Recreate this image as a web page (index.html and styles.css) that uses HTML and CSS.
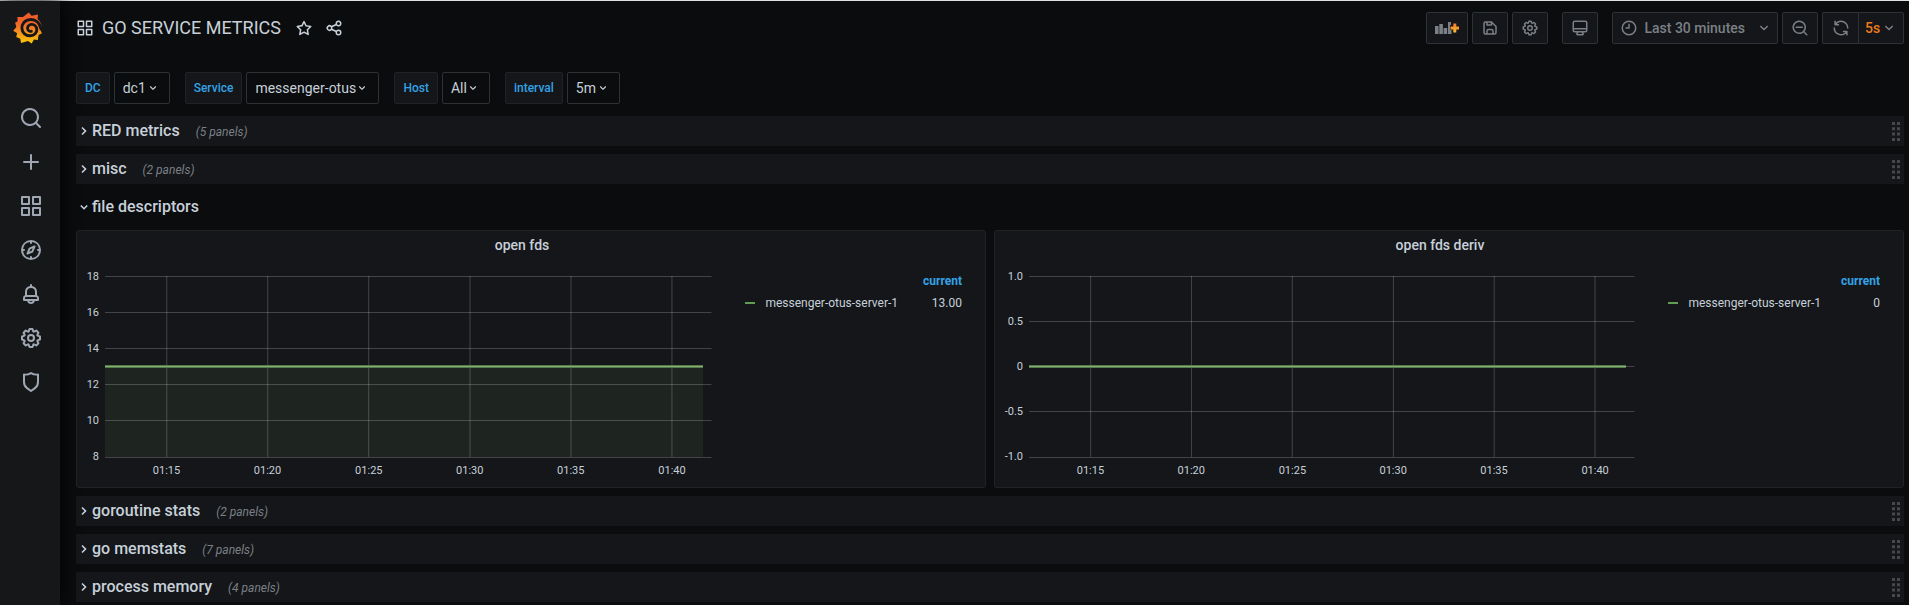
FILE: index.html
```
<!DOCTYPE html>
<html lang="en">
<head>
<meta charset="utf-8">
<title>GO SERVICE METRICS</title>
<link rel="stylesheet" href="styles.css">
</head>
<body>
<svg width="0" height="0" class="defs" aria-hidden="true">
  <symbol id="search" viewBox="0 0 24 24"><path d="M21.71,20.29,18,16.61A9,9,0,1,0,16.61,18l3.68,3.68a1,1,0,0,0,1.42,0A1,1,0,0,0,21.71,20.29ZM11,18a7,7,0,1,1,7-7A7,7,0,0,1,11,18Z"/></symbol>
  <symbol id="zoom-out" viewBox="0 0 24 24"><path d="M21.71,20.29,18,16.61A9,9,0,1,0,16.61,18l3.68,3.68a1,1,0,0,0,1.42,0A1,1,0,0,0,21.71,20.29ZM11,18a7,7,0,1,1,7-7A7,7,0,0,1,11,18ZM15,10H7a1,1,0,0,0,0,2h8a1,1,0,0,0,0-2Z"/></symbol>
  <symbol id="plus" viewBox="0 0 24 24"><path d="M19,11H13V5a1,1,0,0,0-2,0v6H5a1,1,0,0,0,0,2h6v6a1,1,0,0,0,2,0V13h6a1,1,0,0,0,0-2Z"/></symbol>
  <symbol id="apps" viewBox="0 0 24 24"><path d="M10,13H3a1,1,0,0,0-1,1v7a1,1,0,0,0,1,1h7a1,1,0,0,0,1-1V14A1,1,0,0,0,10,13ZM9,20H4V15H9ZM21,2H14a1,1,0,0,0-1,1v7a1,1,0,0,0,1,1h7a1,1,0,0,0,1-1V3A1,1,0,0,0,21,2ZM20,9H15V4h5Zm1,4H14a1,1,0,0,0-1,1v7a1,1,0,0,0,1,1h7a1,1,0,0,0,1-1V14A1,1,0,0,0,21,13Zm-1,7H15V15h5ZM10,2H3A1,1,0,0,0,2,3v7a1,1,0,0,0,1,1h7a1,1,0,0,0,1-1V3A1,1,0,0,0,10,2ZM9,9H4V4H9Z"/></symbol>
  <symbol id="compass" viewBox="0 0 24 24"><path d="M12,2A10,10,0,1,0,22,12,10,10,0,0,0,12,2Zm1,17.93V19a1,1,0,0,0-2,0v.93A8,8,0,0,1,4.07,13H5a1,1,0,0,0,0-2H4.07A8,8,0,0,1,11,4.07V5a1,1,0,0,0,2,0V4.07A8,8,0,0,1,19.93,11H19a1,1,0,0,0,0,2h.93A8,8,0,0,1,13,19.93ZM15.14,7.55l-5,2.12a1,1,0,0,0-.52.52l-2.12,5a1,1,0,0,0,.21,1.1,1,1,0,0,0,.7.3.93.93,0,0,0,.4-.09l5-2.12a1,1,0,0,0,.52-.52l2.12-5a1,1,0,0,0-1.31-1.31Zm-2.49,5.1-2.28,1,1-2.28,2.28-1Z"/></symbol>
  <symbol id="bell" viewBox="0 0 24 24"><path d="M18,13.18V10a6,6,0,0,0-5-5.91V3a1,1,0,0,0-2,0V4.09A6,6,0,0,0,6,10v3.18A3,3,0,0,0,4,16v2a1,1,0,0,0,1,1H8.14a4,4,0,0,0,7.72,0H19a1,1,0,0,0,1-1V16A3,3,0,0,0,18,13.18ZM8,10a4,4,0,0,1,8,0v3H8Zm4,10a2,2,0,0,1-1.72-1h3.44A2,2,0,0,1,12,20Zm6-3H6V16a1,1,0,0,1,1-1H17a1,1,0,0,1,1,1Z"/></symbol>
  <symbol id="cog" viewBox="0 0 24 24"><path d="M21.32,9.55l-1.89-.63.89-1.78A1,1,0,0,0,20.13,6L18,3.87a1,1,0,0,0-1.15-.19l-1.78.89-.63-1.89A1,1,0,0,0,13.5,2h-3a1,1,0,0,0-.95.68L8.92,4.57,7.14,3.68A1,1,0,0,0,6,3.87L3.87,6a1,1,0,0,0-.19,1.15l.89,1.78-1.89.63A1,1,0,0,0,2,10.5v3a1,1,0,0,0,.68.95l1.89.63-.89,1.78A1,1,0,0,0,3.87,18L6,20.13a1,1,0,0,0,1.15.19l1.78-.89.63,1.89a1,1,0,0,0,.95.68h3a1,1,0,0,0,.95-.68l.63-1.89,1.78.89A1,1,0,0,0,18,20.13L20.13,18a1,1,0,0,0,.19-1.15l-.89-1.78,1.89-.63A1,1,0,0,0,22,13.5v-3A1,1,0,0,0,21.32,9.55ZM20,12.78l-1.2.4A2,2,0,0,0,17.64,16l.57,1.14-1.1,1.1L16,17.64a2,2,0,0,0-2.79,1.16l-.4,1.2H11.22l-.4-1.2A2,2,0,0,0,8,17.64l-1.14.57-1.1-1.1L6.36,16A2,2,0,0,0,5.2,13.18L4,12.78V11.22l1.2-.4A2,2,0,0,0,6.36,8L5.79,6.89l1.1-1.1L8,6.36A2,2,0,0,0,10.82,5.2l.4-1.2h1.56l.4,1.2A2,2,0,0,0,16,6.36l1.14-.57,1.1,1.1L17.64,8a2,2,0,0,0,1.16,2.79l1.2.4ZM12,8a4,4,0,1,0,4,4A4,4,0,0,0,12,8Zm0,6a2,2,0,1,1,2-2A2,2,0,0,1,12,14Z"/></symbol>
  <symbol id="shield" viewBox="0 0 24 24"><path d="M19.63,3.65a1,1,0,0,0-.84-.2,8,8,0,0,1-6.22-1.27,1,1,0,0,0-1.14,0A8,8,0,0,1,5.21,3.45a1,1,0,0,0-.84.2A1,1,0,0,0,4,4.43v7.45a9,9,0,0,0,3.77,7.33l3.65,2.6a1,1,0,0,0,1.16,0l3.65-2.6A9,9,0,0,0,20,11.88V4.43A1,1,0,0,0,19.63,3.65ZM18,11.88a7,7,0,0,1-2.93,5.7L12,19.77,8.93,17.58A7,7,0,0,1,6,11.88V5.58a10,10,0,0,0,6-1.39,10,10,0,0,0,6,1.39Z"/></symbol>
  <symbol id="star" viewBox="0 0 24 24"><path d="M22,9.67A1,1,0,0,0,21.14,9l-5.69-.83L12.9,3a1,1,0,0,0-1.8,0L8.55,8.16,2.86,9a1,1,0,0,0-.81.68,1,1,0,0,0,.25,1l4.13,4-1,5.68A1,1,0,0,0,6.9,21.44L12,18.77l5.1,2.67a.93.93,0,0,0,.46.12,1,1,0,0,0,.59-.19,1,1,0,0,0,.4-1l-1-5.68,4.13-4A1,1,0,0,0,22,9.67Zm-6.15,4a1,1,0,0,0-.29.88l.72,4.2-3.76-2a1.06,1.06,0,0,0-.94,0l-3.76,2,.72-4.2a1,1,0,0,0-.29-.88l-3-3,4.21-.61a1,1,0,0,0,.76-.55L12,5.7l1.88,3.82a1,1,0,0,0,.76.55l4.21.61Z"/></symbol>
  <symbol id="share" viewBox="0 0 24 24"><path d="M18,14a4,4,0,0,0-3.08,1.48l-5.1-2.35a3.64,3.64,0,0,0,0-2.26l5.1-2.35A4,4,0,1,0,14,6a4.17,4.17,0,0,0,.07.71L8.79,9.14a4,4,0,1,0,0,5.72l5.28,2.43A4.17,4.17,0,0,0,14,18a4,4,0,1,0,4-4ZM18,4a2,2,0,1,1-2,2A2,2,0,0,1,18,4ZM6,14a2,2,0,1,1,2-2A2,2,0,0,1,6,14Zm12,6a2,2,0,1,1,2-2A2,2,0,0,1,18,20Z"/></symbol>
  <symbol id="save" viewBox="0 0 24 24"><path d="M20.71,9.29l-6-6a1,1,0,0,0-.32-.21A1.09,1.09,0,0,0,14,3H6A3,3,0,0,0,3,6V18a3,3,0,0,0,3,3H18a3,3,0,0,0,3-3V10A1,1,0,0,0,20.71,9.29ZM9,5h4V7H9Zm6,14H9V16a1,1,0,0,1,1-1h4a1,1,0,0,1,1,1Zm4-1a1,1,0,0,1-1,1H17V16a3,3,0,0,0-3-3H10a3,3,0,0,0-3,3v3H6a1,1,0,0,1-1-1V6A1,1,0,0,1,6,5H7V8A1,1,0,0,0,8,9h6a1,1,0,0,0,1-1V6.41l4,4Z"/></symbol>
  <symbol id="monitor" viewBox="0 0 24 24"><path d="M19,2H5A3,3,0,0,0,2,5V15a3,3,0,0,0,3,3H7.64l-.58,1a2,2,0,0,0,0,2,2,2,0,0,0,1.75,1h6.46A2,2,0,0,0,17,21a2,2,0,0,0,0-2l-.59-1H19a3,3,0,0,0,3-3V5A3,3,0,0,0,19,2ZM8.77,20,10,18H14l1.2,2ZM20,15a1,1,0,0,1-1,1H5a1,1,0,0,1-1-1V14H20Zm0-3H4V5A1,1,0,0,1,5,4H19a1,1,0,0,1,1,1Z"/></symbol>
  <symbol id="clock" viewBox="0 0 24 24"><path d="M12,2A10,10,0,1,0,22,12,10,10,0,0,0,12,2Zm0,18a8,8,0,1,1,8-8A8,8,0,0,1,12,20ZM12,6a1,1,0,0,0-1,1v4H8a1,1,0,0,0,0,2h4a1,1,0,0,0,1-1V7A1,1,0,0,0,12,6Z"/></symbol>
  <symbol id="angle-down" viewBox="0 0 24 24"><path d="M17,9.17a1,1,0,0,0-1.41,0L12,12.71,8.46,9.17a1,1,0,0,0-1.41,0,1,1,0,0,0,0,1.42l4.24,4.24a1,1,0,0,0,1.42,0L17,10.59A1,1,0,0,0,17,9.17Z"/></symbol>
  <symbol id="sync" viewBox="0 0 24 24"><path d="M19.91,15.51H15.38a1,1,0,0,0,0,2h2.4A8,8,0,0,1,4,12a1,1,0,1,0-2,0,10,10,0,0,0,16.88,7.23V21a1,1,0,0,0,2,0V16.5A1,1,0,0,0,19.91,15.51ZM12,2A10,10,0,0,0,5.12,4.77V3a1,1,0,0,0-2,0V7.5a1,1,0,0,0,1,1h4.5a1,1,0,0,0,0-2H6.22A8,8,0,0,1,20,12a1,1,0,0,0,2,0A10,10,0,0,0,12,2Z"/></symbol>
  <symbol id="caret-right" viewBox="0 0 8 12"><path d="M2 2.5 5.5 6 2 9.5" fill="none" stroke="currentColor" stroke-width="1.6"/></symbol>
  <symbol id="caret-down" viewBox="0 0 8 12"><path d="M.8 4.5 4 7.7 7.2 4.5" fill="none" stroke="currentColor" stroke-width="1.6"/></symbol>
  <symbol id="grip" viewBox="0 0 8 19"><path d="M0 0h3v3H0zM5 0h3v3H5zM0 5.3h3v3H0zM5 5.3h3v3H5zM0 10.6h3v3H0zM5 10.6h3v3H5zM0 16h3v3H0zM5 16h3v3H5z"/></symbol>
</svg>

<div class="app">
  <nav class="sidebar" aria-label="Main">
    <a class="logo" href="#" aria-label="Home">
      <svg viewBox="0 0 30 32" width="30" height="32">
        <defs><linearGradient id="flame" x1="0" y1="0" x2="0" y2="1"><stop offset="0" stop-color="#f05a28"/><stop offset=".35" stop-color="#f1652a"/><stop offset="1" stop-color="#fbca0a"/></linearGradient></defs>
        <path fill="url(#flame)" d="M15.7.5 18.6 3.700 25 2.600 24.600 7.200C27.500 9.600 28.600 12.300 28.600 15.300L26.900 17.300 29 21.200 25.600 22.900 24.800 28 20.900 27.600 18.700 31.500 15 29.100 8 31 7.300 26.700 3.200 25 4.200 21.300.2 18.800 3.400 15 2.100 10.700 4.600 9.200 4.400 5.100 10 4.900Z"/>
        <path fill="none" stroke="#161719" stroke-width="2.900" stroke-linecap="round" d="M27.800 16.500C26.500 9.800 21.500 7.300 17 7.600 11.500 8 8.600 12.200 8.900 16.400 9.200 21 12.800 24 17.200 23.800 21.400 23.600 24 20.500 23.800 17.300 23.500 14 21 12.200 18.400 12.400 15.800 12.700 14.400 14.700 14.600 16.700 14.800 18.600 16.500 19.700 18.300 19.300"/>
      </svg>
    </a>
    <a href="#" aria-label="Search"><svg class="icon-lg"><use href="#search"/></svg></a>
    <a href="#" aria-label="Create"><svg class="icon-lg"><use href="#plus"/></svg></a>
    <a href="#" aria-label="Dashboards"><svg class="icon-lg"><use href="#apps"/></svg></a>
    <a href="#" aria-label="Explore"><svg class="icon-lg"><use href="#compass"/></svg></a>
    <a href="#" aria-label="Alerting"><svg class="icon-lg"><use href="#bell"/></svg></a>
    <a href="#" aria-label="Configuration"><svg class="icon-lg"><use href="#cog"/></svg></a>
    <a href="#" aria-label="Server admin"><svg class="icon-lg"><use href="#shield"/></svg></a>
  </nav>

  <main class="main">
    <header class="toolbar">
      <svg class="icon-md"><use href="#apps"/></svg>
      <h1>GO SERVICE METRICS</h1>
      <button class="plain" aria-label="Mark as favorite"><svg class="icon-md"><use href="#star"/></svg></button>
      <button class="plain" aria-label="Share dashboard"><svg class="icon-md"><use href="#share"/></svg></button>
      <div class="actions">
        <div class="group">
          <button class="btn btn-add" aria-label="Add panel">
            <svg viewBox="0 0 24 14" width="24" height="14">
              <defs><linearGradient id="sun" x1="0" y1="0" x2="0" y2="1"><stop offset="0" stop-color="#f2752e"/><stop offset="1" stop-color="#fbc02d"/></linearGradient></defs>
              <path d="M0 5h3.600v8H0zM4.300 3h3.600v10H4.300zM8.600 7h3.600v6H8.600zM13 1h3v3h-1v5h1.500v4H13z"/>
              <path fill="url(#sun)" d="M18.300 2.500h3v3H24v3h-2.700v3h-3v-3h-2.800v-3h2.800z"/>
            </svg>
          </button>
          <button class="btn" aria-label="Save dashboard"><svg class="icon"><use href="#save"/></svg></button>
          <button class="btn" aria-label="Dashboard settings"><svg class="icon"><use href="#cog"/></svg></button>
        </div>
        <button class="btn" aria-label="Cycle view mode"><svg class="icon"><use href="#monitor"/></svg></button>
        <div class="group">
          <button class="btn btn-time" aria-haspopup="true"><svg class="icon"><use href="#clock"/></svg><span>Last 30 minutes</span><svg class="icon"><use href="#angle-down"/></svg></button>
          <button class="btn" aria-label="Zoom out"><svg class="icon"><use href="#zoom-out"/></svg></button>
          <div class="refresh">
            <button class="btn" aria-label="Refresh"><svg class="icon"><use href="#sync"/></svg></button>
            <div class="picker picker-refresh">
              <select aria-label="Refresh interval"><option>5s</option></select>
              <svg class="icon"><use href="#angle-down"/></svg>
            </div>
          </div>
        </div>
      </div>
    </header>

    <form class="variables">
      <div class="variable"><label for="v-dc">DC</label><div class="picker"><select id="v-dc"><option>dc1</option></select><svg class="icon-sm"><use href="#angle-down"/></svg></div></div>
      <div class="variable"><label for="v-service">Service</label><div class="picker"><select id="v-service"><option>messenger-otus</option></select><svg class="icon-sm"><use href="#angle-down"/></svg></div></div>
      <div class="variable"><label for="v-host">Host</label><div class="picker"><select id="v-host"><option>All</option></select><svg class="icon-sm"><use href="#angle-down"/></svg></div></div>
      <div class="variable"><label for="v-interval">interval</label><div class="picker"><select id="v-interval"><option>5m</option></select><svg class="icon-sm"><use href="#angle-down"/></svg></div></div>
    </form>

    <div class="rows">
      <section class="row"><button class="row-title"><svg class="caret"><use href="#caret-right"/></svg>RED metrics<span class="count">(5 panels)</span></button><svg class="grip"><use href="#grip"/></svg></section>
      <section class="row"><button class="row-title"><svg class="caret"><use href="#caret-right"/></svg>misc<span class="count">(2 panels)</span></button><svg class="grip"><use href="#grip"/></svg></section>
      <section class="row row-open"><button class="row-title" aria-expanded="true"><svg class="caret"><use href="#caret-down"/></svg>file descriptors</button></section>

      <div class="panels">
        <section class="panel">
          <h2>open fds</h2>
          <div class="panel-body">
            <div class="y-axis"><span>18</span><span>16</span><span>14</span><span>12</span><span>10</span><span>8</span></div>
            <svg class="plot" role="img" aria-label="open fds over time">
              <rect class="area" x="0" y="90" width="98.6%" height="91"/>
              <g class="grid">
                <rect y="0" width="100%" height="1"/><rect y="36" width="100%" height="1"/><rect y="72" width="100%" height="1"/><rect y="108" width="100%" height="1"/><rect y="144" width="100%" height="1"/><rect y="181" width="100%" height="1"/>
                <rect x="10.1%" width="1" height="181"/><rect x="26.75%" width="1" height="181"/><rect x="43.4%" width="1" height="181"/><rect x="60.1%" width="1" height="181"/><rect x="76.75%" width="1" height="181"/><rect x="93.4%" width="1" height="181"/>
              </g>
              <rect class="series-edge" y="89" width="98.6%" height="3"/><rect class="series" y="90" width="98.6%" height="1"/>
              <g class="x-axis"><text x="10.15%" y="198">01:15</text><text x="26.8%" y="198">01:20</text><text x="43.5%" y="198">01:25</text><text x="60.15%" y="198">01:30</text><text x="76.8%" y="198">01:35</text><text x="93.5%" y="198">01:40</text></g>
            </svg>
            <table class="legend">
              <thead><tr><th></th><th scope="col">current</th></tr></thead>
              <tbody><tr><td><i class="swatch"></i>messenger-otus-server-1</td><td>13.00</td></tr></tbody>
            </table>
          </div>
        </section>
        <section class="panel panel-wide-axis">
          <h2>open fds deriv</h2>
          <div class="panel-body">
            <div class="y-axis"><span>1.0</span><span>0.5</span><span>0</span><span>-0.5</span><span>-1.0</span></div>
            <svg class="plot" role="img" aria-label="open fds deriv over time">
              <g class="grid">
                <rect y="0" width="100%" height="1"/><rect y="45" width="100%" height="1"/><rect y="90" width="100%" height="1"/><rect y="135" width="100%" height="1"/><rect y="181" width="100%" height="1"/>
                <rect x="10.1%" width="1" height="181"/><rect x="26.75%" width="1" height="181"/><rect x="43.4%" width="1" height="181"/><rect x="60.1%" width="1" height="181"/><rect x="76.75%" width="1" height="181"/><rect x="93.4%" width="1" height="181"/>
              </g>
              <rect class="series-edge" y="89" width="98.6%" height="3"/><rect class="series" y="90" width="98.6%" height="1"/>
              <g class="x-axis"><text x="10.15%" y="198">01:15</text><text x="26.8%" y="198">01:20</text><text x="43.5%" y="198">01:25</text><text x="60.15%" y="198">01:30</text><text x="76.8%" y="198">01:35</text><text x="93.5%" y="198">01:40</text></g>
            </svg>
            <table class="legend">
              <thead><tr><th></th><th scope="col">current</th></tr></thead>
              <tbody><tr><td><i class="swatch"></i>messenger-otus-server-1</td><td>0</td></tr></tbody>
            </table>
          </div>
        </section>
      </div>

      <section class="row"><button class="row-title"><svg class="caret"><use href="#caret-right"/></svg>goroutine stats<span class="count">(2 panels)</span></button><svg class="grip"><use href="#grip"/></svg></section>
      <section class="row"><button class="row-title"><svg class="caret"><use href="#caret-right"/></svg>go memstats<span class="count">(7 panels)</span></button><svg class="grip"><use href="#grip"/></svg></section>
      <section class="row"><button class="row-title"><svg class="caret"><use href="#caret-right"/></svg>process memory<span class="count">(4 panels)</span></button><svg class="grip"><use href="#grip"/></svg></section>
    </div>
  </main>
</div>
</body>
</html>
```
FILE: styles.css
```
* { box-sizing: border-box; }

body {
  margin: 0;
  background: #0b0c0e;
  color: #c7d0d9;
  font: 14px/20px Roboto, "Liberation Sans", sans-serif;
}

.defs { position: absolute; }

svg { display: block; flex: none; fill: currentColor; }
.icon-lg { width: 24px; height: 24px; }
.icon-md { width: 18px; height: 18px; }
.icon { width: 18px; height: 18px; }
.icon-sm { width: 14px; height: 14px; }

button, select {
  margin: 0;
  font: inherit;
  color: inherit;
  cursor: pointer;
}

.app {
  display: flex;
  min-height: 100vh;
  border-top: 1px solid #dde2df;
}

/* Sidebar */
.sidebar {
  flex: none;
  width: 60px;
  display: flex;
  flex-direction: column;
  align-items: center;
  gap: 20px;
  padding-top: 11px;
  background: #161719;
  box-shadow: 0 0 20px #000;
  color: #9fa7b3;
}
.sidebar a { color: inherit; margin-left: 2px; }
.sidebar .logo { margin: 0 0 42px -4px; }

/* Header */
.main { flex: 1; min-width: 0; padding: 11px 5px 0 16px; }

.toolbar { display: flex; align-items: center; height: 32px; }
.toolbar h1 {
  margin: 0 14px 0 8px;
  font-size: 18px;
  font-weight: 400;
}
.plain {
  padding: 0;
  margin-right: 12px;
  border: 0;
  background: none;
}

.actions { display: flex; gap: 14px; margin-left: auto; color: #7b8087; }
.group { display: flex; gap: 4px; }
.btn {
  display: flex;
  align-items: center;
  justify-content: center;
  width: 36px;
  height: 32px;
  padding: 0;
  border: 1px solid #2c3235;
  border-radius: 2px;
  background: #141619;
}
.btn-add { width: 42px; }
.btn-time { width: auto; padding: 0 4px 0 7px; font-weight: 500; }
.btn-time span { margin: 0 10px 0 6px; }
.refresh { display: flex; }
.refresh .btn { border-radius: 2px 0 0 2px; border-right: 0; }

/* Drop-downs */
.picker { display: grid; align-items: center; }
.picker select, .picker svg { grid-area: 1 / 1; }
.picker svg { justify-self: end; margin-right: 10px; pointer-events: none; }
.picker select {
  appearance: none;
  height: 32px;
  padding: 0 22px 0 8px;
  border: 1px solid #2c3235;
  border-radius: 2px;
  background: #0b0c0e;
}
.picker-refresh select {
  padding: 0 22px 0 6px;
  border-radius: 0 2px 2px 0;
  background: #141619;
  color: #eb7b18;
  font-weight: 500;
}
.picker-refresh svg { margin-right: 6px; }

.variables { display: flex; gap: 15px; margin-top: 28px; }
.variable { display: flex; gap: 4px; }
.variable label {
  height: 32px;
  padding: 0 8px;
  border: 1px solid #202226;
  border-radius: 2px;
  background: #141619;
  color: #33a2e5;
  font-size: 12px;
  font-weight: 500;
  line-height: 30px;
}

/* Dashboard grid */
.rows { display: grid; gap: 8px; margin-top: 12px; }
.row {
  display: flex;
  align-items: center;
  justify-content: space-between;
  height: 30px;
  padding-right: 4px;
  background: #141619;
}
.row-open { background: none; }
.row-title {
  display: flex;
  align-items: center;
  padding: 0 0 0 4px;
  border: 0;
  background: none;
  font-size: 16px;
  font-weight: 500;
}
.caret { width: 8px; height: 12px; margin-right: 4px; }
.count {
  padding: 2px 0 0 16px;
  color: #7b8087;
  font-size: 12px;
  font-style: italic;
  font-weight: 400;
}
.grip { width: 8px; height: 19px; fill: #464749; }

.panels { display: grid; grid-template-columns: 1fr 1fr; gap: 8px; }
.panel {
  height: 258px;
  border: 1px solid #202226;
  border-radius: 3px;
  background: #141619;
}
.panel h2 {
  margin: 4px 0 0;
  padding-right: 18px;
  font-size: 14px;
  font-weight: 500;
  text-align: center;
}
.panel-body { display: flex; margin-top: 21px; padding-right: 23px; }
.y-axis {
  display: flex;
  flex-direction: column;
  justify-content: space-between;
  width: 22px;
  height: 192px;
  margin: -5px 6px -5px 0;
  font-size: 11px;
  line-height: 12px;
  text-align: right;
}
.panel-wide-axis .y-axis { width: 28px; }
.plot { flex: 1; min-width: 0; height: 204px; overflow: visible; }
.grid { fill: #fff; fill-opacity: .2; }
.area { fill: #7eb26d; fill-opacity: .1; }
.series-edge { fill: #56784c; }
.series { fill: #7eb26d; }
.x-axis { fill: #c7d0d9; font-size: 11px; text-anchor: middle; }

.legend {
  align-self: flex-start;
  margin-left: 34px;
  margin-top: -6px;
  border-collapse: collapse;
  font-size: 12px;
  line-height: 22px;
  white-space: nowrap;
}
.legend th, .legend td { padding: 0; text-align: right; }
.legend th { color: #33a2e5; font-weight: 700; }
.legend td + td, .legend th + th { padding-left: 25px; }
.panel-wide-axis td + td, .panel-wide-axis th + th { padding-left: 20px; }
.swatch {
  display: inline-block;
  width: 10px;
  height: 2px;
  margin-right: 10px;
  background: #629e51;
  vertical-align: 3px;
}
```
